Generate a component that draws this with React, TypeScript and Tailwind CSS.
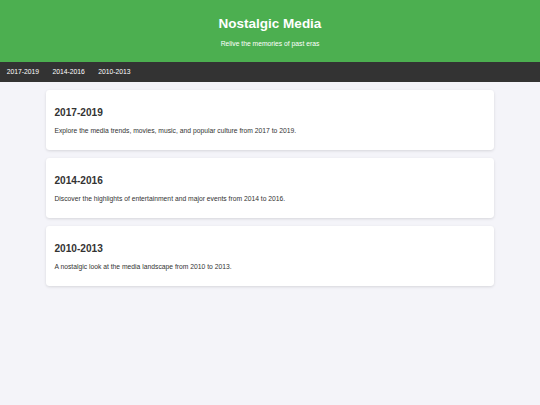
const eras = [
  {
    id: '2017-2019',
    text: 'Explore the media trends, movies, music, and popular culture from 2017 to 2019.',
  },
  {
    id: '2014-2016',
    text: 'Discover the highlights of entertainment and major events from 2014 to 2016.',
  },
  {
    id: '2010-2013',
    text: 'A nostalgic look at the media landscape from 2010 to 2013.',
  },
];

export default function App() {
  return (
    <div className="min-h-[405px] bg-[#f4f4f9] text-[#333] font-['Liberation_Sans',Arial,sans-serif]">
      <header className="bg-[#4caf50] text-white text-center py-[6.75px]">
        <h1 className="text-[13.5px] font-bold leading-[15.5px] my-[9px]">Nostalgic Media</h1>
        <p className="text-[6.75px] leading-[7.8px] mb-[6.75px]">Relive the memories of past eras</p>
      </header>

      <nav className="bg-[#333] h-[20px] flex items-center">
        {eras.map((e) => (
          <a key={e.id} href={`#${e.id}`} className="px-[6.75px] text-white text-[6.75px] leading-[7.8px]">
            {e.id}
          </a>
        ))}
      </nav>

      <main className="pt-[8.4px] flex flex-col gap-[8.4px]">
        {eras.map((e) => (
          <section
            key={e.id}
            id={e.id}
            className="mx-auto w-[448px] bg-white rounded-[3.4px] p-[8.44px] shadow-[0_1px_3px_rgba(0,0,0,0.12)]"
          >
            <h2 className="text-[10.125px] font-bold leading-[11.6px] my-[8.4px]">{e.id}</h2>
            <p className="text-[6.75px] leading-[7.8px] mb-[6.75px]">{e.text}</p>
          </section>
        ))}
      </main>
    </div>
  );
}
